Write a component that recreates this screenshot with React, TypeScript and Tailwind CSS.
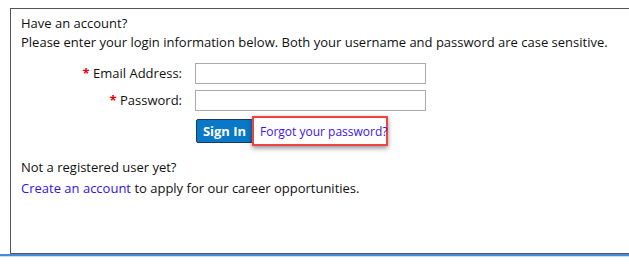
export default function App() {
  return (
    <div className="w-[629px] h-[264px] bg-white overflow-hidden text-[13px] leading-[19px] text-[#111]" style={{ fontFamily: '"Open Sans", "Noto Sans", sans-serif' }}>
      <div className="ml-[10px] mt-[8px] h-[246px] border-t border-l border-b border-[#555] pl-[10px] pt-[5px]">
        <div>Have an account?</div>
        <div>Please enter your login information below. Both your username and password are case sensitive.</div>
        <div className="mt-[11px] flex flex-col gap-[6px]">
          <div className="flex items-center">
            <div className="w-[162px] text-right pr-[1px]">
              <span className="text-[#e00] font-bold">*</span> Email Address:
            </div>
            <div className="ml-[12px] w-[231px] h-[21px] border border-[#aaa] bg-white" />
          </div>
          <div className="flex items-center">
            <div className="w-[162px] text-right pr-[1px]">
              <span className="text-[#e00] font-bold">*</span> Password:
            </div>
            <div className="ml-[12px] w-[231px] h-[21px] border border-[#aaa] bg-white" />
          </div>
        </div>
        <div className="mt-[5px] flex items-center pl-[175px]">
          <button className="shrink-0 w-[57px] h-[24px] bg-[#0a78c8] border border-[#1d3b57] rounded-[2px] text-white font-bold text-[13px] leading-none">
            Sign In
          </button>
          <div className="shrink-0 ml-[-1px] w-[136px] h-[30px] border-2 border-[#ee4444] shadow-[0_2px_5px_rgba(0,0,0,0.45)] flex items-center pl-[6px] whitespace-nowrap text-[12px] text-[#3a14ee]">
            Forgot your password?
          </div>
        </div>
        <div className="mt-[12px]">Not a registered user yet?</div>
        <div className="mt-[2px]">
          <span className="text-[#3311ee]">Create an account</span> to apply for our career opportunities.
        </div>
      </div>
      <div className="h-[2px] bg-[#4a8ad6]" />
      <div className="h-[1px] bg-[#c8dcf4]" />
    </div>
  );
}
